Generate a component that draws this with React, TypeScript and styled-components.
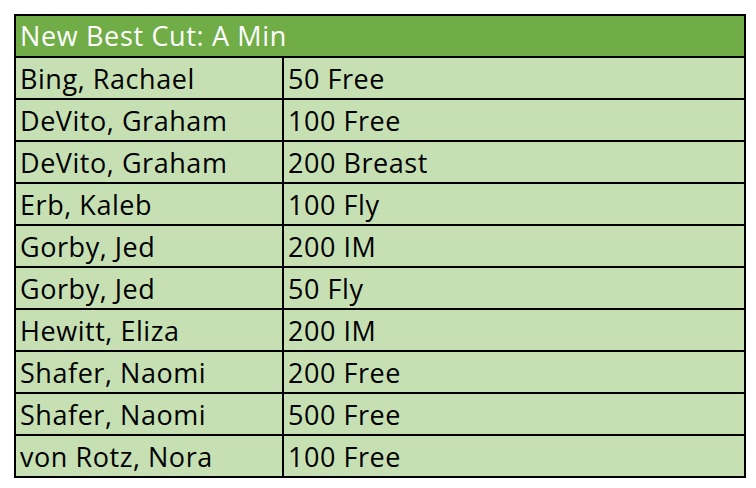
import React from "react";
import styled, { createGlobalStyle } from "styled-components";

const GlobalStyle = createGlobalStyle`
  body {
    margin: 0;
    background: #ffffff;
  }
`;

const Page = styled.div`
  padding: 14px 10px 0 14px;
  font-family: "Open Sans", "Noto Sans", sans-serif;
`;

const Sheet = styled.div`
  display: grid;
  grid-template-columns: 266px 460px;
  grid-auto-rows: 40px;
  gap: 2px;
  padding: 2px;
  background-color: #000000;
  width: max-content;
`;

const Header = styled.div`
  grid-column: 1 / -1;
  background-color: #70ad47;
  color: #ffffff;
  font-size: 27px;
  letter-spacing: 0.65px;
  display: flex;
  align-items: center;
  padding: 0 0 2px 4px;
`;

const Cell = styled.div`
  background-color: #c6e0b4;
  color: #000000;
  font-size: 27px;
  letter-spacing: 0.55px;
  display: flex;
  align-items: center;
  padding-left: 4px;
  white-space: nowrap;
`;

const rows: [string, string][] = [
  ["Bing, Rachael", "50 Free"],
  ["DeVito, Graham", "100 Free"],
  ["DeVito, Graham", "200 Breast"],
  ["Erb, Kaleb", "100 Fly"],
  ["Gorby, Jed", "200 IM"],
  ["Gorby, Jed", "50 Fly"],
  ["Hewitt, Eliza", "200 IM"],
  ["Shafer, Naomi", "200 Free"],
  ["Shafer, Naomi", "500 Free"],
  ["von Rotz, Nora", "100 Free"],
];

const App = () => {
  return (
    <Page>
      <GlobalStyle />
      <Sheet>
        <Header>New Best Cut: A Min</Header>
        {rows.map(([name, event], index) => (
          <React.Fragment key={index}>
            <Cell>{name}</Cell>
            <Cell>{event}</Cell>
          </React.Fragment>
        ))}
      </Sheet>
    </Page>
  );
};

export default App;
